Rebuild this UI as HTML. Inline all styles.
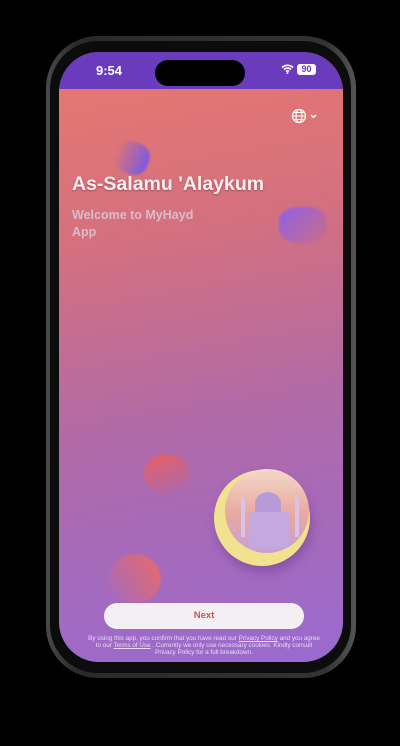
<!DOCTYPE html>
<html><head><style>
*{margin:0;padding:0;box-sizing:border-box}
body{width:400px;height:746px;background:#000;position:relative;overflow:hidden;font-family:"Liberation Sans",sans-serif}
.frame{position:absolute;left:46px;top:36px;width:310px;height:642px;border-radius:52px;background:linear-gradient(90deg,#4a4a4a,#2a2a2a 10%,#333 90%,#555);}
.bezel{position:absolute;left:50px;top:41px;width:301px;height:632px;border-radius:48px;background:#0c0c0c}
.screen{position:absolute;left:59px;top:52px;width:284px;height:610px;border-radius:40px;overflow:hidden;background:linear-gradient(170deg,#e8786e 0%,#d4707f 30%,#b06aa8 60%,#9a6ad0 100%)}
.status{position:absolute;left:0;top:0;width:100%;height:37px;background:#6a3bbd}
.island{position:absolute;left:96px;top:8px;width:90px;height:26px;border-radius:13px;background:#000}
.time{position:absolute;left:37px;top:11px;color:#fff;font-size:13px;font-weight:bold}
.bat{position:absolute;left:238px;top:12px;width:19px;height:11px;background:#fff;border-radius:3px;font-size:9px;font-weight:bold;color:#6a3bbd;text-align:center;line-height:11px}
.blob{position:absolute;border-radius:40%;filter:blur(1px)}
h1{position:absolute;left:13px;top:121px;color:#fbeef0;font-size:19.5px;font-weight:bold;text-shadow:0 1px 2px rgba(0,0,0,.3)}
.sub{position:absolute;left:13px;top:155px;color:#dcbccb;font-size:12.5px;line-height:17px;font-weight:bold}
.btn{position:absolute;left:45px;top:551px;width:200px;height:26px;border-radius:13px;background:#f3eff2;color:#d0504f;font-size:9.5px;font-weight:bold;text-align:center;line-height:26px}
.legal{position:absolute;left:26px;top:584px;width:238px;color:#e8dcf3;font-size:6.3px;line-height:6.8px;text-align:center}
.legal u{text-decoration:underline}
.home{position:absolute;left:94px;top:654px;width:100px;height:3px;border-radius:2px;background:#111}
</style></head><body>
<div class="frame"></div><div class="bezel"></div>
<div class="screen">
<div class="status"><div class="time">9:54</div><div class="island"></div>
<svg style="position:absolute;left:222px;top:12px" width="13" height="10" viewBox="0 0 13 10"><path d="M1 3.5a8 8 0 0 1 11 0M3 5.5a5 5 0 0 1 7 0M5 7.5a2 2 0 0 1 3 0" stroke="#fff" stroke-width="1.6" fill="none"/><circle cx="6.5" cy="9" r="1" fill="#fff"/></svg>
<div class="bat">90</div></div>
<svg style="position:absolute;left:232px;top:56px" width="30" height="16" viewBox="0 0 30 16"><circle cx="8" cy="8" r="6.5" stroke="#fff" stroke-width="1.3" fill="none"/><ellipse cx="8" cy="8" rx="3" ry="6.5" stroke="#fff" stroke-width="1.1" fill="none"/><path d="M1.5 8h13M2.5 4.5h11M2.5 11.5h11" stroke="#fff" stroke-width="1.1"/><path d="M20 7l2.5 2.5L25 7" stroke="#fff" stroke-width="1.3" fill="none"/></svg>
<div class="blob" style="left:56px;top:90px;width:34px;height:32px;background:linear-gradient(90deg,rgba(200,100,150,0),#7a5ae0);transform:rotate(20deg)"></div>
<div class="blob" style="left:220px;top:155px;width:48px;height:36px;background:linear-gradient(135deg,#8a60e8,rgba(200,100,140,.2))"></div>
<div class="blob" style="left:85px;top:402px;width:45px;height:40px;background:linear-gradient(160deg,#e86060,rgba(160,100,200,.2));border-radius:50%"></div>
<div class="blob" style="left:50px;top:502px;width:52px;height:50px;background:linear-gradient(60deg,rgba(160,100,210,0),#e86a6a);border-radius:50%"></div>
<h1>As-Salamu 'Alaykum</h1>
<div class="sub">Welcome to MyHayd<br>App</div>
<div style="position:absolute;left:155px;top:418px;width:96px;height:96px;border-radius:50%;background:#f0e28e;box-shadow:2px 6px 10px rgba(80,40,120,.35)"></div>
<div style="position:absolute;left:166px;top:417px;width:84px;height:84px;border-radius:50%;background:linear-gradient(180deg,#f4d9c8,#e8a7a0 55%,#c8a0d8);"></div>
<div style="position:absolute;left:196px;top:440px;width:26px;height:24px;border-radius:50% 50% 10% 10%;background:#b79ad8"></div>
<div style="position:absolute;left:190px;top:460px;width:40px;height:35px;background:#c4a8e0"></div>
<div style="position:absolute;left:182px;top:445px;width:4px;height:40px;background:#d8c4ea"></div>
<div style="position:absolute;left:236px;top:445px;width:4px;height:40px;background:#d8c4ea"></div>
<div class="btn">Next</div>
<div class="legal">By using this app, you confirm that you have read our <u>Privacy Policy</u> and you agree to our <u>Terms of Use</u> . Currently we only use necessary cookies. Kindly consult Privacy Policy for a full breakdown.</div>
<div class="home"></div>
</div>
</body></html>
